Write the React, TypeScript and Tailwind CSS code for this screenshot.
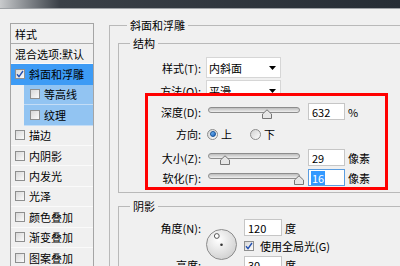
import React from 'react';

type Effect = { name: string; kind: 'plain' | 'selected' | 'sub' | 'box'; checked?: boolean };

const effects: Effect[] = [
  { name: '混合选项:默认', kind: 'plain' },
  { name: '斜面和浮雕', kind: 'selected', checked: true },
  { name: '等高线', kind: 'sub' },
  { name: '纹理', kind: 'sub' },
  { name: '描边', kind: 'box' },
  { name: '内阴影', kind: 'box' },
  { name: '内发光', kind: 'box' },
  { name: '光泽', kind: 'box' },
  { name: '颜色叠加', kind: 'box' },
  { name: '渐变叠加', kind: 'box' },
  { name: '图案叠加', kind: 'box' },
];

function Check({ checked }: { checked?: boolean }) {
  return (
    <span className="w-[10px] h-[10px] shrink-0 border border-[#8e8f8f] bg-gradient-to-br from-[#d8d8d8] to-[#fbfbfb] flex items-center justify-center">
      {checked && (
        <svg width="8" height="8" viewBox="0 0 8 8">
          <path d="M1 4.2 L3 6.6 L7 1" stroke="#2350b0" strokeWidth="1.4" fill="none" />
        </svg>
      )}
    </span>
  );
}

function Radio({ on }: { on?: boolean }) {
  return (
    <span className="w-[11px] h-[11px] shrink-0 rounded-full border border-[#8b8b8b] bg-gradient-to-br from-[#d2d2d2] to-[#fdfdfd] flex items-center justify-center">
      {on && <span className="w-[6px] h-[6px] rounded-full border border-[#134f96] bg-gradient-to-br from-[#7cc0f8] to-[#1a62be]" />}
    </span>
  );
}

function Dropdown({ value }: { value: string }) {
  return (
    <div className="ml-[5px] w-[75px] h-[21px] bg-white border border-[#d6d6d6] flex items-center justify-between pl-[2px] pr-[4px]">
      <span>{value}</span>
      <svg width="7" height="4" viewBox="0 0 7 4">
        <path d="M0 0 H7 L3.5 4 Z" fill="#000" />
      </svg>
    </div>
  );
}

function Slider({ thumb }: { thumb: number }) {
  return (
    <div className="relative ml-[7px] w-[92px] h-[17px] shrink-0">
      <div className="absolute left-0 right-0 top-[4px] h-[6px] rounded-full border border-[#8d8d8d] bg-gradient-to-b from-[#bdbdbd] to-[#efefef]" />
      <svg className="absolute top-[6px]" style={{ left: thumb - 5 }} width="10" height="10" viewBox="0 0 10 10">
        <path d="M0.5 9.5 V5 L5 0.8 L9.5 5 V9.5 Z" fill="#e6e6e6" stroke="#767676" />
      </svg>
    </div>
  );
}

function NumBox({ value, focused, className }: { value: string; focused?: boolean; className: string }) {
  return (
    <div
      className={`${className} h-[17px] bg-white border flex items-center pl-[2px] ${
        focused ? 'border-[#5b9de0]' : 'border-[#c6c6c6]'
      }`}
    >
      {focused ? <span className="bg-[#3399ff] text-white px-px">{value}</span> : <span className="pl-px">{value}</span>}
    </div>
  );
}

const sliderRows = [
  { label: '深度(D):', thumb: 59, value: '632', unit: '%', gap: 'mt-0' },
];

export default function App() {
  return (
    <div className="w-[400px] h-[266px] overflow-hidden bg-[#f0f0f0] text-[11px] leading-[14px] text-black font-['Noto_Sans_CJK_SC','Liberation_Sans',sans-serif] flex flex-col">
      <div className="h-[8px] shrink-0 bg-gradient-to-r from-[#c9cbcd] via-[#3a4047] via-15% to-[#262d35]" />
      <div className="h-px shrink-0 bg-[#9ea2a6]" />

      <div className="flex items-start">
        {/* style list */}
        <div className="ml-[10px] mt-[14px] w-[84px] shrink-0 border border-b-0 border-[#a5a5a5]">
          <div className="h-[20px] border-b border-[#ababab] pl-[4px] flex items-center">样式</div>
          {effects.map((e) => {
            if (e.kind === 'plain') {
              return (
                <div key={e.name} className="h-[20.4px] border-b border-[#fafafa] pl-[4px] flex items-center whitespace-nowrap">
                  {e.name}
                </div>
              );
            }
            if (e.kind === 'sub') {
              return (
                <div key={e.name} className="h-[20.4px] pl-[13px] flex">
                  <div className="flex-1 bg-[#92c4f2] border-b border-[#c4ddf6] pl-[6px] flex items-center">
                    <Check />
                    <span className="ml-[4px]">{e.name}</span>
                  </div>
                </div>
              );
            }
            return (
              <div
                key={e.name}
                className={`h-[20.4px] border-b pl-[4px] flex items-center ${
                  e.kind === 'selected' ? 'bg-[#3d9bf5] border-[#3d9bf5]' : 'border-[#fafafa]'
                }`}
              >
                <Check checked={e.checked} />
                <span className="ml-[4px] whitespace-nowrap">{e.name}</span>
              </div>
            );
          })}
        </div>

        {/* bevel & emboss */}
        <fieldset className="ml-[15px] mt-[9px] w-[320px] shrink-0 border border-[#b9b9b9]">
          <legend className="ml-[17px] px-[3px] leading-[14px]">斜面和浮雕</legend>

          <fieldset className="ml-[8px] mt-[4px] w-[300px] border border-[#b9b9b9] pb-[2px]">
            <legend className="ml-[11px] px-[3px] leading-[14px]">结构</legend>

            <div className="mt-[7px] flex items-center">
              <div className="w-[82px] text-right">样式(T):</div>
              <Dropdown value="内斜面" />
            </div>
            <div className="mt-[2px] flex items-center">
              <div className="w-[82px] text-right">方法(Q):</div>
              <Dropdown value="平滑" />
            </div>

            {/* highlighted block */}
            <div className="relative z-10 -mt-[8px] ml-[26px] w-[243px] bg-[#f0f0f0] border-[3px] border-[#ff0000] pt-[7px] pb-[1px]">
              {sliderRows.map((r) => (
                <div key={r.label} className="h-[17px] flex items-center">
                  <div className="w-[53px] text-right">{r.label}</div>
                  <Slider thumb={r.thumb} />
                  <NumBox value={r.value} className="ml-[8px] w-[37px]" />
                  <span className="ml-[3px]">{r.unit}</span>
                </div>
              ))}
              <div className="mt-[6px] h-[16px] flex items-center">
                <div className="w-[53px] text-right">方向:</div>
                <span className="ml-[6px]"><Radio on /></span>
                <span className="ml-[3px]">上</span>
                <span className="ml-[18px]"><Radio /></span>
                <span className="ml-[3px]">下</span>
              </div>
              <div className="mt-[7px] h-[17px] flex items-center">
                <div className="w-[53px] text-right">大小(Z):</div>
                <Slider thumb={17} />
                <NumBox value="29" className="ml-[8px] w-[37px]" />
                <span className="ml-[3px]">像素</span>
              </div>
              <div className="mt-[3px] h-[17px] flex items-center">
                <div className="w-[53px] text-right">软化(F):</div>
                <Slider thumb={91} />
                <NumBox value="16" focused className="ml-[8px] w-[37px]" />
                <span className="ml-[3px]">像素</span>
              </div>
            </div>
          </fieldset>

          <fieldset className="ml-[8px] mt-[6px] w-[300px] border border-[#b9b9b9] pb-[10px]">
            <legend className="ml-[11px] px-[3px] leading-[14px]">阴影</legend>
            <div className="mt-[6px] flex items-start">
              <div className="w-[82px] flex flex-col">
                <div className="h-[17px] flex items-center justify-end">角度(N):</div>
                <div className="h-[20px]" />
                <div className="h-[17px] flex items-center justify-end">高度:</div>
              </div>
              <svg className="ml-[5px] mt-[10px] shrink-0" width="31" height="31" viewBox="0 0 31 31">
                <defs>
                  <radialGradient id="dial" cx="40%" cy="35%" r="70%">
                    <stop offset="0" stopColor="#ffffff" />
                    <stop offset="1" stopColor="#cfcfcf" />
                  </radialGradient>
                </defs>
                <circle cx="15.5" cy="15.5" r="15" fill="url(#dial)" stroke="#8c8c8c" />
                <circle cx="10.8" cy="7" r="2.4" fill="#fff" stroke="#555" />
                <circle cx="15.5" cy="15.8" r="1.3" fill="#333" />
              </svg>
              <div className="ml-[7px] flex flex-col">
                <div className="h-[17px] flex items-center">
                  <NumBox value="120" className="w-[38px]" />
                  <span className="ml-[3px]">度</span>
                </div>
                <div className="h-[20px] flex items-center">
                  <Check checked />
                  <span className="ml-[6px] whitespace-nowrap">使用全局光(G)</span>
                </div>
                <div className="h-[17px] flex items-center">
                  <NumBox value="30" className="w-[38px]" />
                  <span className="ml-[3px]">度</span>
                </div>
              </div>
            </div>
          </fieldset>
        </fieldset>
      </div>
    </div>
  );
}
